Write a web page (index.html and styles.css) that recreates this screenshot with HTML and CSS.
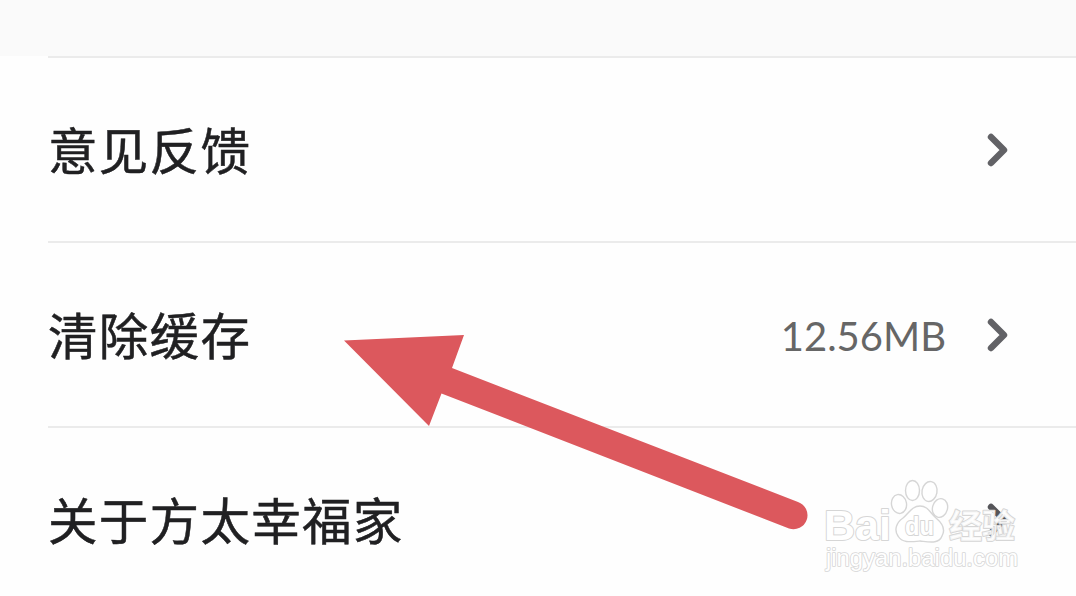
FILE: index.html
```
<!DOCTYPE html>
<html lang="zh-CN">
<head>
<meta charset="utf-8">
<title>设置</title>
<link rel="stylesheet" href="styles.css">
</head>
<body>
<main class="screen">
  <div class="section-gap"></div>
  <div class="list">
    <div class="row">
      <span class="label">意见反馈</span>
      <svg class="chevron" viewBox="0 0 24 36"><path d="M5 5 18 18 5 31"/></svg>
    </div>
    <div class="row">
      <span class="label">清除缓存</span>
      <span class="value">12.56MB</span>
      <svg class="chevron" viewBox="0 0 24 36"><path d="M5 5 18 18 5 31"/></svg>
    </div>
    <div class="row">
      <span class="label">关于方太幸福家</span>
      <svg class="chevron" viewBox="0 0 24 36"><path d="M5 5 18 18 5 31"/></svg>
    </div>
  </div>
  <svg class="pointer" viewBox="0 0 1076 596">
    <path d="M344 340.500 464 335 452 368 798 502A13.500 13.500 0 0 1 789 528.500L441.500 393.500 429 426Z"/>
  </svg>
  <svg class="watermark" viewBox="0 0 220 110">
    <text class="brand" x="14" y="70" textLength="67" lengthAdjust="spacingAndGlyphs">Bai</text>
    <g class="paw">
      <ellipse cx="89" cy="34" rx="7.500" ry="9.500" transform="rotate(-10 89 34)"/>
      <ellipse cx="102.500" cy="20.500" rx="7" ry="10"/>
      <ellipse cx="119.500" cy="21.500" rx="7.500" ry="10" transform="rotate(10 119.500 21.500)"/>
      <ellipse cx="130" cy="38" rx="7.500" ry="9.500" transform="rotate(15 130 38)"/>
      <path d="M110 36C102 36 99 43 93 48C86 53 84 60 88 66C92 73 100 72 110 71C120 72 129 74 132 66C136 59 132 53 126 48C120 43 118 36 110 36Z"/>
    </g>
    <text class="du" x="95" y="65" textLength="29" lengthAdjust="spacingAndGlyphs">du</text>
    <text class="jingyan" x="139" y="68" textLength="66" lengthAdjust="spacingAndGlyphs">经验</text>
    <text class="site" x="16" y="96" textLength="192" lengthAdjust="spacingAndGlyphs">jingyan.baidu.com</text>
  </svg>
</main>
</body>
</html>
```
FILE: styles.css
```
body {
  margin: 0;
  background: #fefefe;
}
.screen {
  position: relative;
  height: 596px;
  overflow: hidden;
  font-family: "Noto Sans CJK SC", sans-serif;
}
.section-gap {
  height: 56px;
  background: #fafafa;
}
.list {
  margin-left: 48px;
}
.row {
  display: flex;
  align-items: center;
  box-sizing: border-box;
  height: 185.200px;
  padding-right: 66px;
  border-top: 2px solid #ebebeb;
}
.label {
  flex: 1;
  padding-bottom: 2px;
  color: #202022;
  font-size: 49.500px;
  letter-spacing: 1.300px;
  line-height: 72px;
  -webkit-text-stroke: 0.500px #202022;
}
.value {
  margin-right: 40px;
  padding-top: 3px;
  color: #666;
  font-family: Lato, sans-serif;
  font-size: 40px;
  line-height: 50px;
}
.chevron {
  width: 24px;
  height: 36px;
  fill: none;
  stroke: #626266;
  stroke-width: 6.400;
  stroke-linecap: round;
  stroke-linejoin: round;
}
.row:last-child .chevron {
  stroke: #555559;
}
.pointer {
  position: absolute;
  inset: 0;
  width: 1076px;
  height: 596px;
  fill: #dc585d;
}
.watermark {
  position: absolute;
  left: 810px;
  top: 470px;
  width: 220px;
  height: 110px;
  fill: #fff;
  stroke: #d6d6d6;
  stroke-width: 2;
  stroke-linejoin: round;
  paint-order: stroke;
}
.brand {
  font: bold 43px "Liberation Sans", sans-serif;
}
.paw {
  paint-order: normal;
  stroke-width: 1.400;
}
.du {
  font: bold 25px "Liberation Sans", sans-serif;
}
.jingyan {
  fill-opacity: 0.8;
  font: bold 33px "Noto Sans CJK SC", sans-serif;
}
.site {
  font: 23px "Liberation Sans", sans-serif;
  stroke-width: 1.600;
}
```
